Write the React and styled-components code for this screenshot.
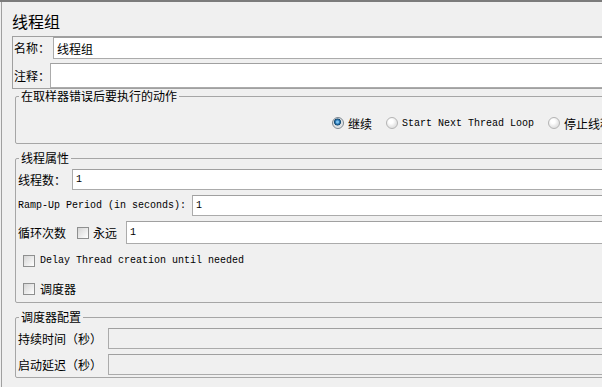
import React from 'react';
import styled, { createGlobalStyle } from 'styled-components';

const CJK = `"Noto Sans CJK SC", "Noto Sans", sans-serif`;
const MONO = `"Liberation Mono", "DejaVu Sans Mono", monospace`;

const GlobalStyle = createGlobalStyle`
  html, body { margin: 0; padding: 0; background: #f0f0f0; overflow: hidden; }
  #root { width: 602px; height: 387px; }
`;

const Frame = styled.div`
  width: 602px;
  height: 387px;
  box-sizing: border-box;
  background: #f0f0f0;
  border-top: 2px solid #7c7c7c;
  padding-left: 1px;
  overflow: hidden;
  font-family: ${CJK};
  font-size: 12px;
  color: #000;
`;

const Inner = styled.div`
  height: 100%;
  border-left: 1px solid #a0a0a0;
  display: flex;
  flex-direction: column;
  align-items: flex-start;
`;

const Title = styled.div`
  padding: 9px 0 0 10px;
  font-size: 16px;
  line-height: 20px;
`;

const NamePanel = styled.div`
  margin: 5px 0 0 10px;
  width: 640px;
  border: 1px solid #a0a0a0;
  padding-left: 1px;
  display: flex;
  flex-direction: column;
  gap: 4px;
`;

const Row = styled.div`
  display: flex;
  align-items: center;
  height: ${(p) => p.$h || 21}px;
  margin-top: ${(p) => p.$mt || 0}px;
  margin-bottom: ${(p) => p.$mb || 0}px;
  padding-left: ${(p) => p.$pl || 0}px;
  flex-shrink: 0;
`;

const Label = styled.span`
  font-family: ${(p) => (p.$mono ? MONO : CJK)};
  font-size: ${(p) => (p.$mono ? 10 : 12)}px;
  line-height: 14px;
  white-space: nowrap;
  margin-left: ${(p) => p.$ml || 0}px;
`;

const Field = styled.div`
  flex: 1;
  align-self: stretch;
  box-sizing: border-box;
  margin-left: ${(p) => p.$ml || 0}px;
  background: ${(p) => (p.$disabled ? '#f0f0f0' : '#fff')};
  border: 1px solid #ababab;
  border-top-color: #a0a0a0;
  display: flex;
  align-items: center;
  padding: 0 3px;
  font-family: ${(p) => (p.$mono ? MONO : CJK)};
  font-size: ${(p) => (p.$mono ? 10 : 12)}px;
  white-space: nowrap;
`;

const Group = styled.fieldset`
  margin: ${(p) => p.$mt || 0}px 0 0 13px;
  padding: 0 0 0 1px;
  width: 640px;
  min-width: 0;
  box-sizing: border-box;
  border: 1px solid #a6a6a6;
  border-radius: 2px;
  display: flex;
  flex-direction: column;
  align-items: stretch;
`;

const Legend = styled.legend`
  margin-left: 2px;
  padding: 0 2px;
  font-size: 12px;
  line-height: 14px;
  height: 14px;
`;

const RadioRow = styled.div`
  display: flex;
  align-items: center;
  height: 16px;
  margin: 12px 0 12px;
  padding-left: 315px;
  white-space: nowrap;
`;

const RadioItem = styled.label`
  display: flex;
  align-items: center;
  gap: 4px;
  margin-right: 14px;
  flex-shrink: 0;
`;

const RadioDot = styled.span`
  width: 12px;
  height: 12px;
  box-sizing: border-box;
  border-radius: 50%;
  border: 1px solid ${(p) => (p.$on ? '#7d8790' : '#b4b4b4')};
  background: ${(p) =>
    p.$on
      ? 'radial-gradient(circle at 45% 40%, #7fc4f0 0 1px, #2a79b8 2px, #14496f 3.2px, #d9dde0 3.8px, #f4f4f4 100%)'
      : 'radial-gradient(circle at 40% 35%, #ffffff 0 2px, #e9e9e9 5px, #d6d6d6 100%)'};
  flex-shrink: 0;
`;

const RadioText = styled.span`
  font-family: ${(p) => (p.$mono ? MONO : CJK)};
  font-size: ${(p) => (p.$mono ? 10 : 12)}px;
`;

const Check = styled.span`
  width: 12px;
  height: 12px;
  box-sizing: border-box;
  border: 1px solid #8e8f8f;
  background: linear-gradient(135deg, #d5d5d5 0%, #eeeeee 60%, #ffffff 100%);
  margin-left: ${(p) => p.$ml || 0}px;
  margin-right: ${(p) => p.$mr || 5}px;
  flex-shrink: 0;
`;

function Radio({ on, mono, children }) {
  return (
    <RadioItem>
      <RadioDot $on={on} />
      <RadioText $mono={mono}>{children}</RadioText>
    </RadioItem>
  );
}

export default function App() {
  return (
    <>
      <GlobalStyle />
      <Frame>
        <Inner>
          <Title>线程组</Title>
          <NamePanel>
            <Row $h={22}>
              <Label>名称：</Label>
              <Field $ml={3}>线程组</Field>
            </Row>
            <Row $h={25}>
              <Label>注释：</Label>
              <Field />
            </Row>
          </NamePanel>

          <Group>
            <Legend>在取样器错误后要执行的动作</Legend>
            <RadioRow>
              <Radio on>继续</Radio>
              <Radio mono>Start Next Thread Loop</Radio>
              <Radio>停止线程</Radio>
            </RadioRow>
          </Group>

          <Group $mt={7}>
            <Legend>线程属性</Legend>
            <Row $mt={4} $pl={1}>
              <Label>线程数：</Label>
              <Field $ml={6} $mono>1</Field>
            </Row>
            <Row $mt={5} $pl={1}>
              <Label $mono>Ramp-Up Period (in seconds):</Label>
              <Field $ml={6} $mono>1</Field>
            </Row>
            <Row $mt={5} $h={23} $pl={1}>
              <Label>循环次数</Label>
              <Check $ml={11} $mr={4} />
              <Label>永远</Label>
              <Field $ml={9} $mono>1</Field>
            </Row>
            <Row $mt={7} $h={20} $pl={6}>
              <Check />
              <Label $mono>Delay Thread creation until needed</Label>
            </Row>
            <Row $mt={8} $mb={3} $h={20} $pl={6}>
              <Check />
              <Label>调度器</Label>
            </Row>
          </Group>

          <Group $mt={7}>
            <Legend>调度器配置</Legend>
            <Row $mt={4} $pl={1}>
              <Label>持续时间（秒）</Label>
              <Field $ml={6} $disabled />
            </Row>
            <Row $mt={5} $mb={2} $pl={1}>
              <Label>启动延迟（秒）</Label>
              <Field $ml={6} $disabled />
            </Row>
          </Group>
        </Inner>
      </Frame>
    </>
  );
}
